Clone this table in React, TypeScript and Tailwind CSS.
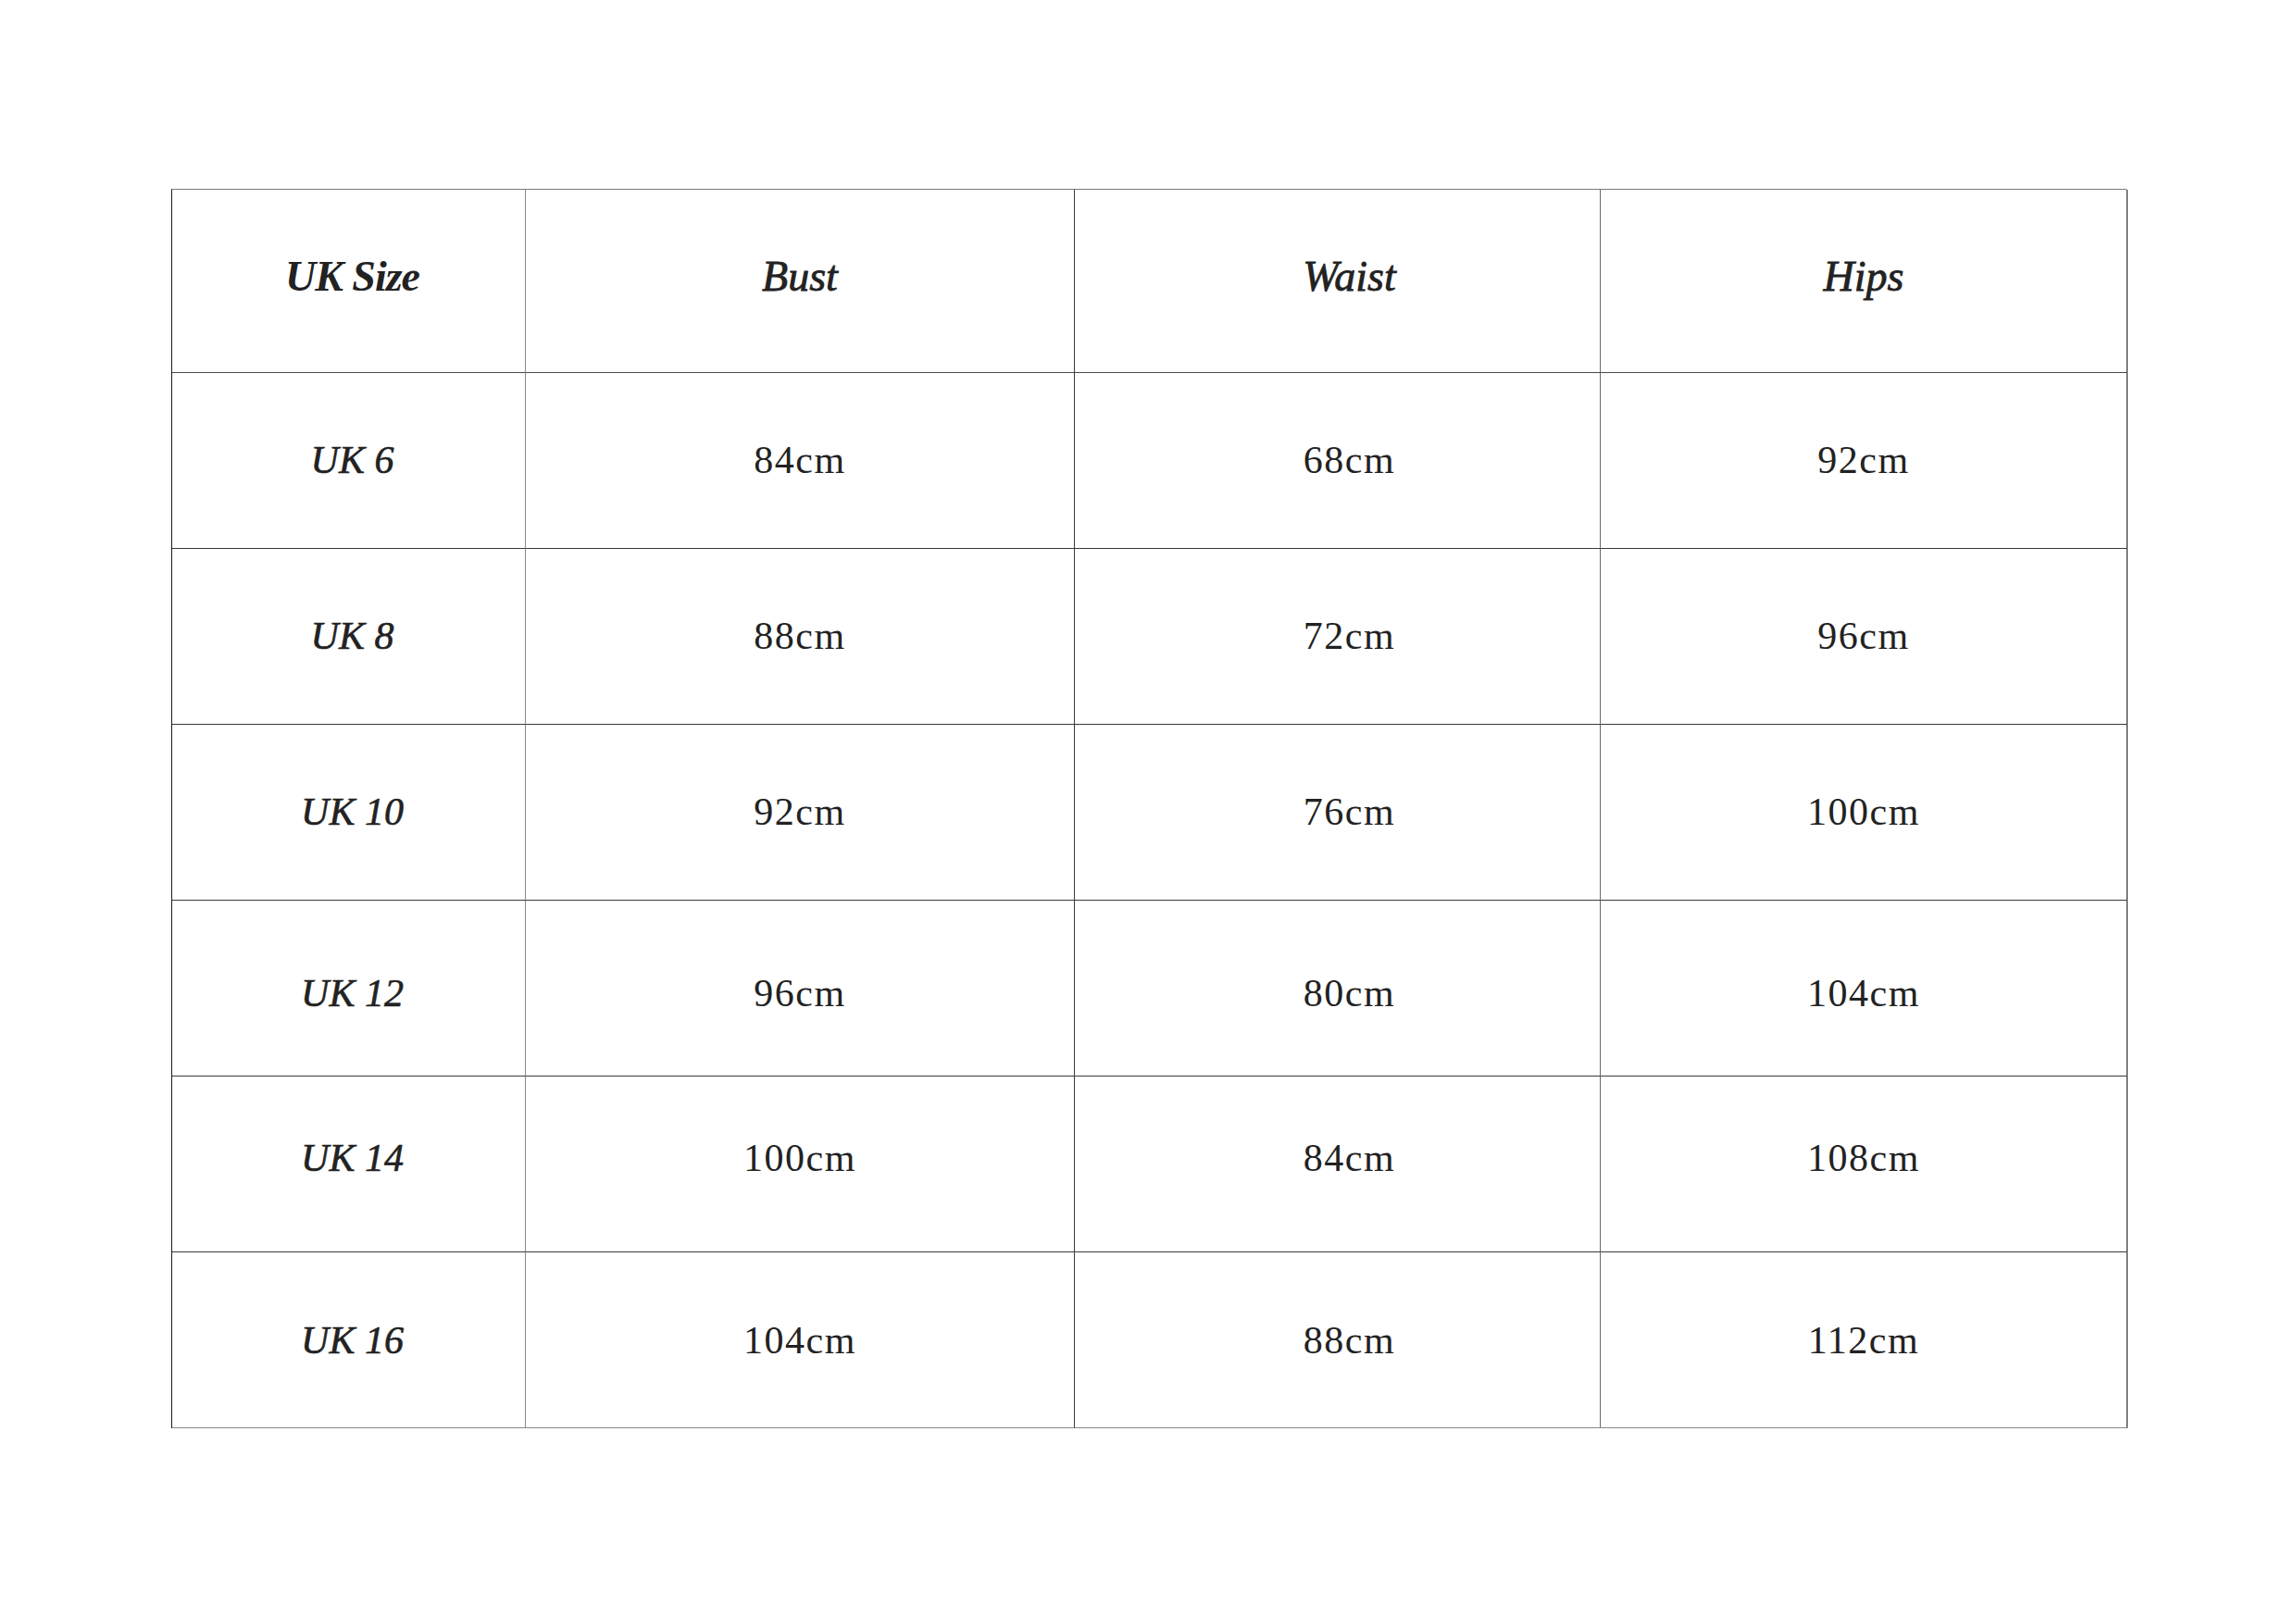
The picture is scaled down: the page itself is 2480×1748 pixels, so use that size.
import React from 'react';

type Row = {
  size: string;
  bust: string;
  waist: string;
  hips: string;
  shift: string;
};

// shift nudges the text of a row the way the printed chart does
const rows: Row[] = [
  { size: 'UK 6', bust: '84cm', waist: '68cm', hips: '92cm', shift: '' },
  { size: 'UK 8', bust: '88cm', waist: '72cm', hips: '96cm', shift: '' },
  { size: 'UK 10', bust: '92cm', waist: '76cm', hips: '100cm', shift: '' },
  { size: 'UK 12', bust: '96cm', waist: '80cm', hips: '104cm', shift: 'pt-[12px]' },
  { size: 'UK 14', bust: '100cm', waist: '84cm', hips: '108cm', shift: 'pb-[12px]' },
  { size: 'UK 16', bust: '104cm', waist: '88cm', hips: '112cm', shift: 'pt-[2px]' },
];

const headers = ['UK Size', 'Bust', 'Waist', 'Hips'];

// column divider colours, as in the printed chart
const colBorder = ['border-r-[#8a8a8a]', 'border-r-[#3a3a3a]', 'border-r-[#6a6a6a]', 'border-r-[#1a1a1a]'];
const colPad = ['pl-[8px]', '', 'pl-[26px]', ''];

const App = () => {
  return (
    <div className="w-[2480px] h-[1748px] bg-white pt-[204px] pl-[185px] font-['Liberation_Serif',serif] text-[#222]">
      <div className="grid w-[2112px] grid-cols-[382px_593px_568px_569px] border-l border-t border-l-[#1a1a1a] border-t-[#7a7a7a]">
        {headers.map((h, i) => (
          <div
            key={h}
            className={`h-[198px] flex items-center justify-center border-r border-b border-b-[#4a4a4a] pb-[10px] ${colBorder[i]} ${colPad[i]}`}
          >
            <span
              className={`text-[46px] italic ${i === 0 ? 'font-bold tracking-[-1px]' : 'font-normal [-webkit-text-stroke:0.8px_#222]'}`}
            >
              {h}
            </span>
          </div>
        ))}
        {rows.map((r, ri) => {
          const last = ri === rows.length - 1;
          const bottom = last ? 'border-b-[#8a8a8a]' : 'border-b-[#3a3a3a]';
          const cell = `h-[190px] flex items-center justify-center border-r border-b ${bottom} ${r.shift}`;
          return (
            <React.Fragment key={r.size}>
              <div className={`${cell} ${colBorder[0]} ${colPad[0]}`}>
                <span className="text-[42px] italic [-webkit-text-stroke:0.6px_#222]">{r.size}</span>
              </div>
              <div className={`${cell} ${colBorder[1]} ${colPad[1]}`}>
                <span className="text-[42px] tracking-[1.5px]">{r.bust}</span>
              </div>
              <div className={`${cell} ${colBorder[2]} ${colPad[2]}`}>
                <span className="text-[42px] tracking-[1.5px]">{r.waist}</span>
              </div>
              <div className={`${cell} ${colBorder[3]} ${colPad[3]}`}>
                <span className="text-[42px] tracking-[1.5px]">{r.hips}</span>
              </div>
            </React.Fragment>
          );
        })}
      </div>
    </div>
  );
};

export default App;
